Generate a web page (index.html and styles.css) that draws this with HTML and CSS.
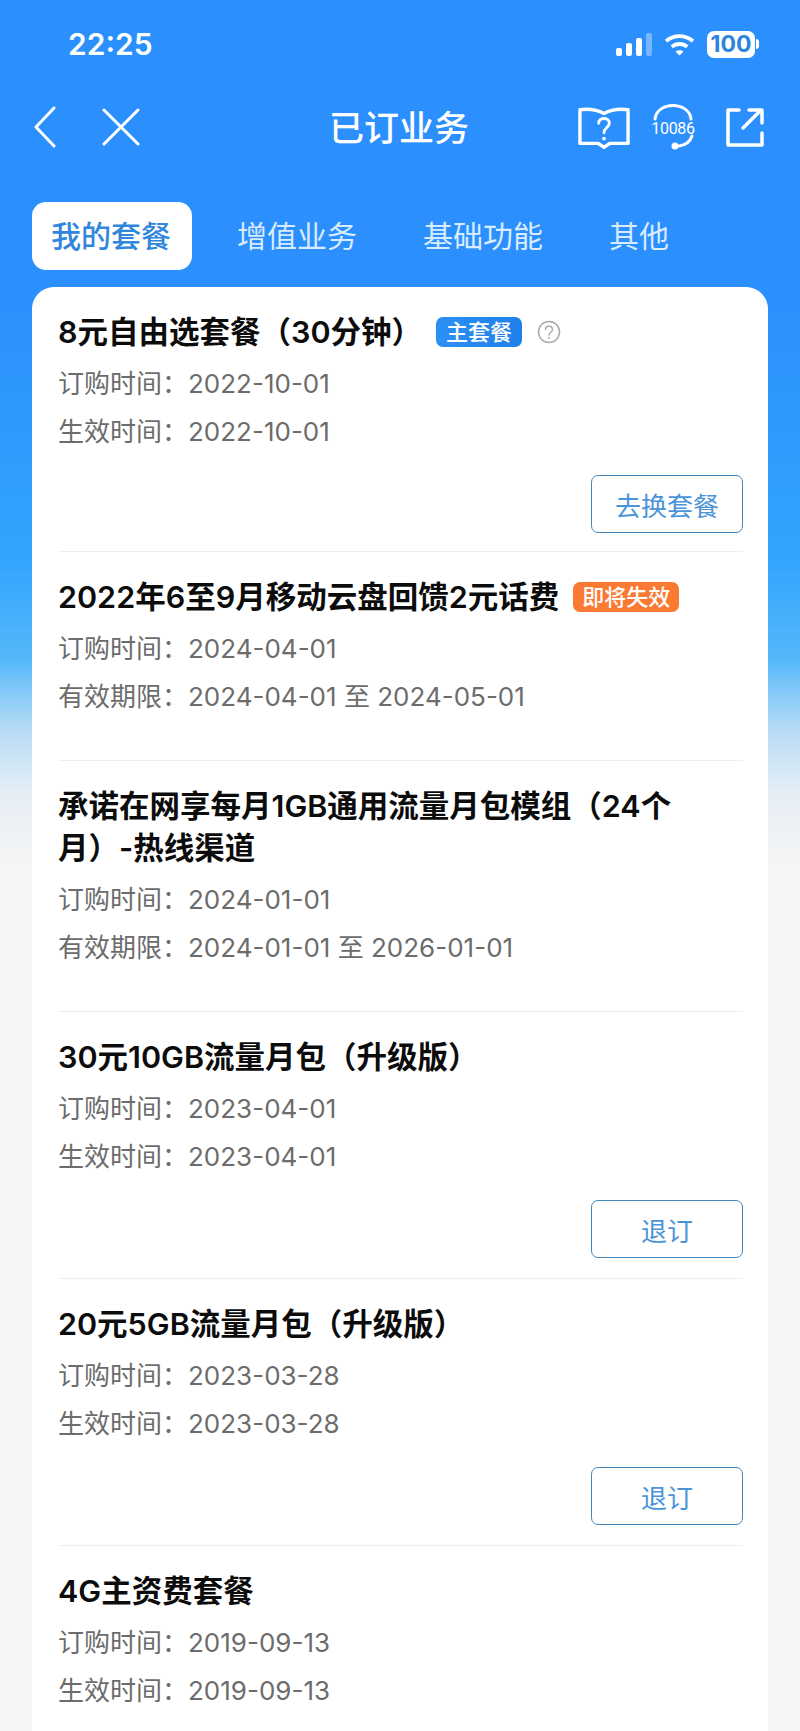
FILE: index.html
```html
<!DOCTYPE html>
<html>
<head>
  <meta charset="utf-8">
  <title>已订业务</title>
  <link rel="stylesheet" href="styles.css">
</head>
<body>
<div class="page">
  <div class="status-bar">
    <span class="clock">22:25</span>
    <div class="status-icons">
      <svg class="signal" width="36" height="23" viewBox="0 0 36 23">
        <rect x="0" y="15" width="6" height="8" rx="2" fill="#fff"/>
        <rect x="10" y="10" width="6" height="13" rx="2" fill="#fff"/>
        <rect x="20" y="5" width="6" height="18" rx="2" fill="#fff"/>
        <rect x="30" y="0" width="6" height="23" rx="2" fill="#fff" opacity=".35"/>
      </svg>
      <svg class="wifi" width="31" height="23" viewBox="0 0 32 24" fill="none" stroke="#fff" stroke-width="4">
        <path d="M2 8.500C10 1.500 22 1.500 30 8.500"/>
        <path d="M8 14.500C12.500 10.500 19.500 10.500 24 14.500"/>
        <path d="M12 19.500L16 23.500L20 19.500C18 17.500 14 17.500 12 19.500Z" fill="#fff" stroke="none"/>
      </svg>
      <div class="battery"><span class="battery-level">100</span><i class="battery-cap"></i></div>
    </div>
  </div>

  <header class="nav-bar">
    <div class="nav-left">
      <svg width="24" height="42" viewBox="0 0 24 42" fill="none" stroke="#fff" stroke-width="3" stroke-linecap="round" stroke-linejoin="round"><path d="M21 2L3 21L21 40"/></svg>
      <svg width="38" height="38" viewBox="0 0 38 38" fill="none" stroke="#fff" stroke-width="3" stroke-linecap="round"><path d="M2 2L36 36M36 2L2 36"/></svg>
    </div>
    <h1 class="nav-title">已订业务</h1>
    <div class="nav-right">
      <svg class="book" width="52" height="44" viewBox="0 0 54 44" fill="none" stroke="#fff" stroke-width="3.500" stroke-linejoin="round">
        <path d="M2 3C10 2 20 3 27 7C34 3 44 2 52 3V38H33L27 42L21 38H2Z"/>
        <path d="M21.500 17C21.500 10.500 32.500 10.500 32.500 17C32.500 21.500 27 21.500 27 27" stroke-linecap="round" stroke-width="3"/>
        <circle cx="27" cy="33" r="2" fill="#fff" stroke="none"/>
      </svg>
      <div class="hotline">
        <svg width="44" height="46" viewBox="0 0 44 46" fill="none" stroke="#fff" stroke-width="3" stroke-linecap="round">
          <path d="M4 15C6 -3 38 -3 40 15"/>
          <path d="M41 32C39 38 35 41 28 42"/>
          <circle cx="24" cy="42" r="3.500" fill="#fff" stroke="none"/>
        </svg>
        <span class="hotline-num">10086</span>
      </div>
      <svg width="38" height="40" viewBox="0 0 38 40" fill="none" stroke="#fff" stroke-width="3.500" stroke-linecap="round" stroke-linejoin="round">
        <path d="M13 3H2V38H36V26"/>
        <path d="M17 21L35 3M23 3H36V16"/>
      </svg>
    </div>
  </header>

  <nav class="tabs">
    <a class="tab tab-active">我的套餐</a>
    <a class="tab">增值业务</a>
    <a class="tab">基础功能</a>
    <a class="tab">其他</a>
  </nav>

  <main class="card">
    <section class="item item-first">
      <h2 class="item-title">8元自由选套餐（30分钟）<span class="tag tag-blue">主套餐</span>
        <svg class="help" width="24" height="24" viewBox="0 0 24 24" fill="none" stroke="#aaa" stroke-width="1.500"><circle cx="12" cy="12" r="10.500"/><path d="M8.500 9.500C8.500 5 15.500 5 15.500 9.500C15.500 12.500 12 12.500 12 15" stroke-linecap="round"/><circle cx="12" cy="18" r="1" fill="#aaa" stroke="none"/></svg>
      </h2>
      <p class="item-row">订购时间：2022-10-01</p>
      <p class="item-row">生效时间：2022-10-01</p>
      <div class="item-actions"><button class="btn" type="button">去换套餐</button></div>
    </section>

    <section class="item item-plain">
      <h2 class="item-title">2022年6至9月移动云盘回馈2元话费<span class="tag tag-orange">即将失效</span></h2>
      <p class="item-row">订购时间：2024-04-01</p>
      <p class="item-row">有效期限：2024-04-01 至 2024-05-01</p>
    </section>

    <section class="item item-plain">
      <h2 class="item-title item-title-wrap">承诺在网享每月1GB通用流量月包模组（24个月）-热线渠道</h2>
      <p class="item-row">订购时间：2024-01-01</p>
      <p class="item-row">有效期限：2024-01-01 至 2026-01-01</p>
    </section>

    <section class="item">
      <h2 class="item-title">30元10GB流量月包（升级版）</h2>
      <p class="item-row">订购时间：2023-04-01</p>
      <p class="item-row">生效时间：2023-04-01</p>
      <div class="item-actions"><button class="btn" type="button">退订</button></div>
    </section>

    <section class="item">
      <h2 class="item-title">20元5GB流量月包（升级版）</h2>
      <p class="item-row">订购时间：2023-03-28</p>
      <p class="item-row">生效时间：2023-03-28</p>
      <div class="item-actions"><button class="btn" type="button">退订</button></div>
    </section>

    <section class="item item-last">
      <h2 class="item-title">4G主资费套餐</h2>
      <p class="item-row">订购时间：2019-09-13</p>
      <p class="item-row">生效时间：2019-09-13</p>
    </section>
  </main>
</div>
</body>
</html>
```

FILE: styles.css
```css
* {
  box-sizing: border-box;
}
html, body {
  margin: 0;
  padding: 0;
}
body {
  font-family: Inter, "Noto Sans CJK SC", sans-serif;
  background: #f5f5f5;
}
.page {
  height: 1731px;
  overflow: hidden;
  background: linear-gradient(#2b90fd 0, #2b90fd 300px, #33a4fd 560px, #55b8fa 660px, #b5dbf5 727px, #e6eef5 793px, #f4f5f6 860px, #f5f5f5 900px);
}

/* status bar */
.status-bar {
  display: flex;
  justify-content: space-between;
  align-items: center;
  height: 44px;
  margin-top: 22px;
  padding: 0 41px 0 68px;
}
.clock {
  font-family: Inter, sans-serif;
  font-size: 30px;
  font-weight: 600;
  color: #fff;
}
.status-icons {
  display: flex;
  align-items: center;
  gap: 12px;
}
.battery {
  display: flex;
  align-items: center;
}
.battery-level {
  width: 48px;
  height: 27px;
  border-radius: 7px;
  background: #fff;
  color: #2b85dc;
  font-size: 23px;
  font-weight: 700;
  line-height: 27px;
  text-align: center;
}
.battery-cap {
  width: 3px;
  height: 10px;
  margin-left: 1px;
  border-radius: 0 3px 3px 0;
  background: #fff;
}

/* nav */
.nav-bar {
  display: grid;
  grid-template-columns: 1fr auto 1fr;
  align-items: center;
  height: 74px;
  margin-top: 24px;
  padding: 0 36px 0 33px;
}
.nav-left {
  display: flex;
  align-items: center;
  gap: 45px;
}
.nav-title {
  margin: 0;
  padding: 0 0 4px 1px;
  font-size: 35px;
  font-weight: 500;
  color: #fff;
}
.nav-right {
  display: flex;
  align-items: center;
  justify-self: end;
  gap: 20px;
}
.book {
  margin: 2px 1px 0 0;
}
.hotline {
  position: relative;
  width: 44px;
  height: 46px;
  margin-right: 11px;
}
.hotline-num {
  position: absolute;
  left: 0;
  top: 15px;
  width: 44px;
  font-family: Roboto, sans-serif;
  font-size: 16px;
  letter-spacing: -0.3px;
  line-height: 20px;
  color: #fff;
  text-align: center;
}

/* tabs */
.tabs {
  display: flex;
  align-items: center;
  margin-top: 38px;
  padding-left: 32px;
  height: 68px;
}
.tab {
  padding: 0 19px;
  font-size: 30px;
  line-height: 68px;
  color: #d8ebff;
  margin-right: 28px;
}
.tab-active {
  width: 160px;
  background: #fff;
  border-radius: 14px;
  color: #2f86dc;
  font-weight: 500;
  margin-right: 26px;
}

/* list */
.card {
  margin: 17px 32px 0;
  padding: 0 25px 0 26px;
  background: #fff;
  border-radius: 22px 22px 0 0;
}
.item {
  padding-top: 24px;
  padding-bottom: 20px;
  border-bottom: 1px solid #eeeeee;
}
.item-first {
  padding-bottom: 18px;
}
.item-plain {
  padding-bottom: 39px;
}
.item-last {
  border-bottom: none;
}
.item-title {
  display: flex;
  align-items: center;
  margin: 0;
  font-size: 30.500px;
  font-weight: 600;
  line-height: 42px;
  color: #0c0c0c;
}
.item-title-wrap {
  display: block;
  width: 620px;
}
.item-row {
  margin: 0;
  font-size: 26px;
  line-height: 48px;
  color: #6c6c6c;
}
.item-title + .item-row {
  margin-top: 7px;
}
.tag {
  height: 30px;
  margin-left: 14px;
  padding: 0 9px;
  border-radius: 7px;
  font-size: 22px;
  line-height: 30px;
  font-weight: 500;
  color: #fff;
}
.tag-blue {
  padding: 0 10px;
  background: linear-gradient(90deg, #2b90f5, #1f80ea);
}
.tag-orange {
  background: #fb7a33;
}
.help {
  margin-left: 15px;
}
.item-actions {
  display: flex;
  justify-content: flex-end;
  margin-top: 19px;
}
.btn {
  width: 152px;
  height: 58px;
  padding: 0;
  border: 1.500px solid #3f88c0;
  border-radius: 7px;
  background: #fff;
  font-family: inherit;
  font-size: 26px;
  color: #4b94d8;
}
```
